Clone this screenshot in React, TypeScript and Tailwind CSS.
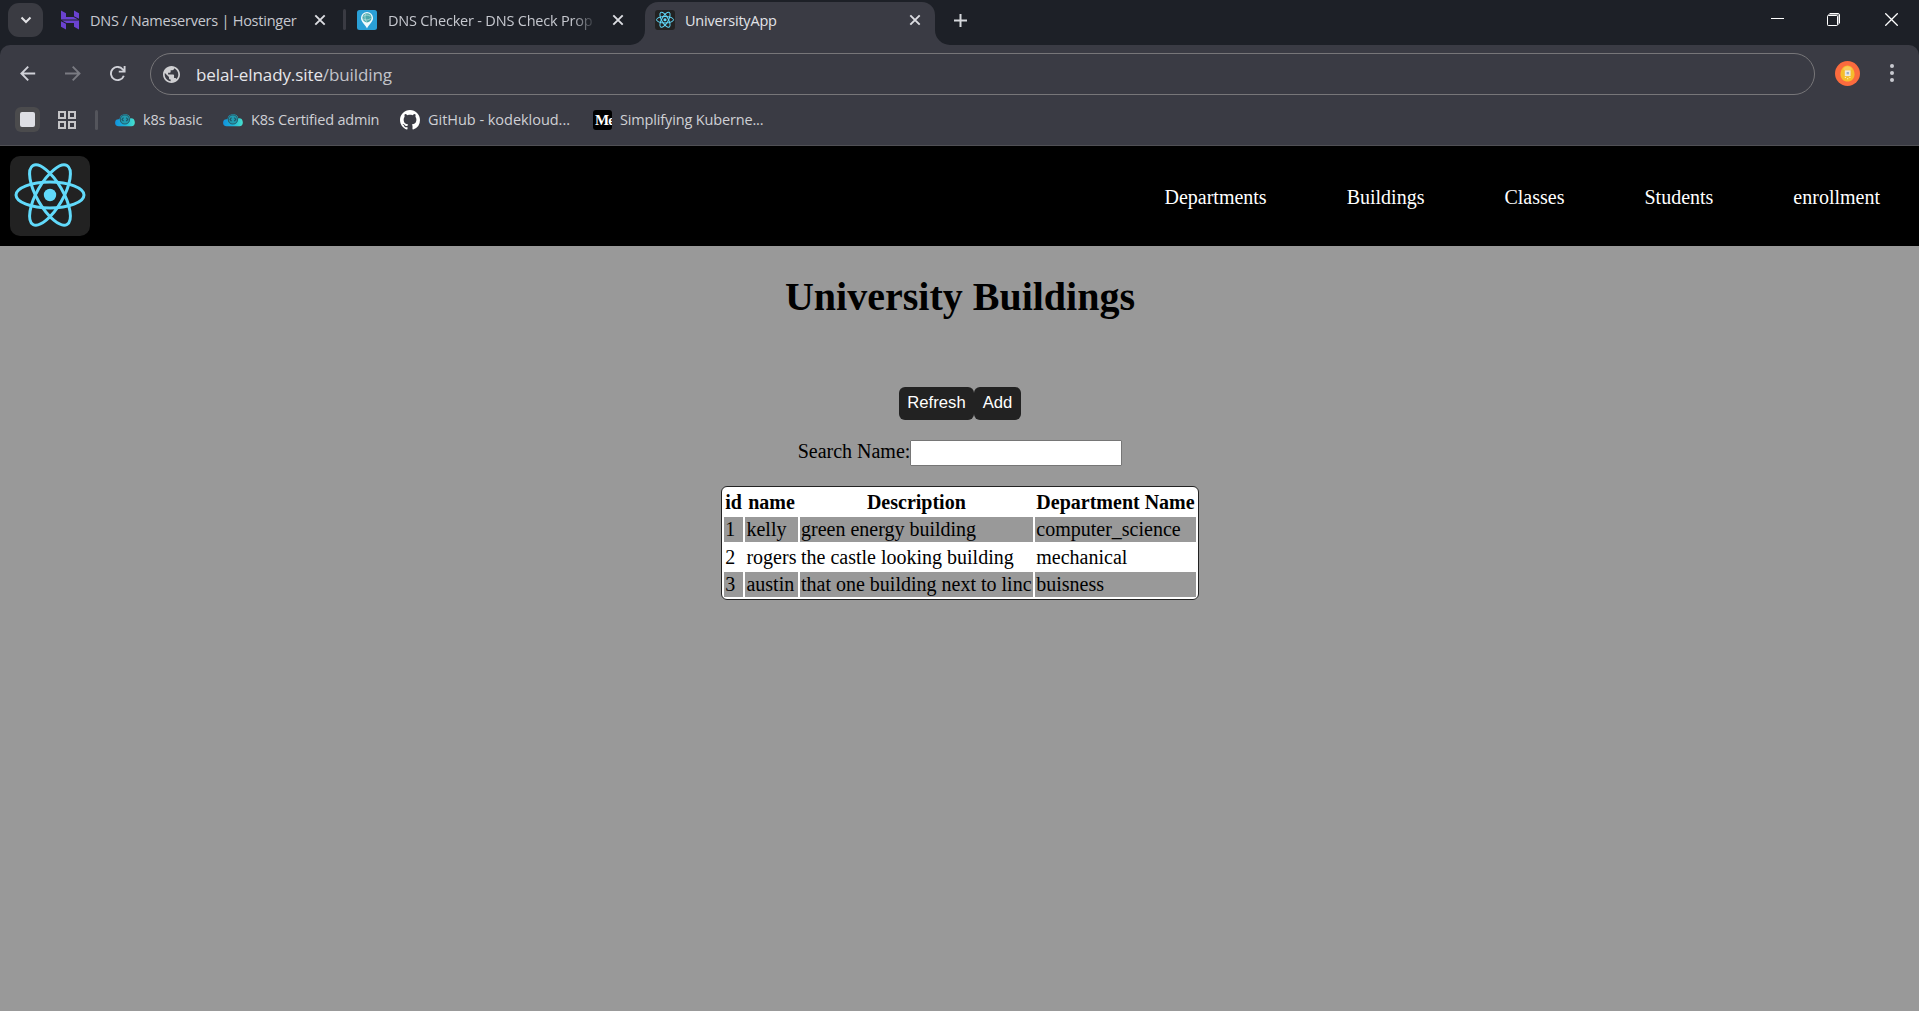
import React from "react";

const UI = "font-['Open_Sans','Noto_Sans',sans-serif]";

function ReactLogo({ className, stroke }: { className: string; stroke: number }) {
  return (
    <svg viewBox="-40 -40 80 80" className={className} fill="none" stroke="#61dafb" strokeWidth={stroke}>
      <circle r="6.2" cy="-1" fill="#61dafb" stroke="none" />
      <g transform="translate(0 -1)">
        <ellipse rx="34" ry="13" />
        <ellipse rx="34" ry="13" transform="rotate(60)" />
        <ellipse rx="34" ry="13" transform="rotate(120)" />
      </g>
    </svg>
  );
}

function Close({ className = "" }: { className?: string }) {
  return (
    <svg viewBox="0 0 12 12" className={`size-3 shrink-0 ${className}`} fill="none" stroke="#dcdde2" strokeWidth="1.9">
      <path d="M1.3 1.3 10.7 10.7M10.7 1.3 1.3 10.7" />
    </svg>
  );
}

function HostingerIcon() {
  return (
    <svg viewBox="0 0 18 20" className="h-5 w-[18px] shrink-0" fill="#6a42d0">
      <path d="M0 .5 5 3.200V7H12.500L17 9.400H0zM13 .5 18 3.200V8.800L13 6.200zM0 11.200 5 13.800V19.500L0 16.800zM1 10.600H18V19.500L13 16.800V13H5.500z" />
    </svg>
  );
}

function DnsIcon() {
  return (
    <svg viewBox="0 0 20 20" className="size-5 shrink-0">
      <rect width="20" height="20" rx="2.5" fill="#2a9fd6" />
      <path d="M10 18.5C8.2 14.6 4 12 4 8a6 6 0 0 1 12 0c0 4-4.200 6.600-6 10.500Z" fill="#f2fbfd" />
      <circle cx="10" cy="7.800" r="4.600" fill="#4ba9ab" />
      <path d="M6.500 6.300c2-1.800 5-1.600 6.800 0M6.200 9c2 1.600 5.600 1.300 7.400-.6M8.500 4c-1 2.500-.6 5.500 1 7.800" fill="none" stroke="#b3dedd" strokeWidth=".8" />
    </svg>
  );
}

function CloudIcon() {
  return (
    <svg viewBox="0 0 20 14" className="h-3.5 w-5 shrink-0">
      <defs>
        <linearGradient id="cloud" x1="0" x2="1">
          <stop offset="0" stopColor="#1292dd" />
          <stop offset="0.5" stopColor="#1db4d8" />
          <stop offset="1" stopColor="#48e0cd" />
        </linearGradient>
      </defs>
      <path d="M3.500 13.200A3.400 3.400 0 0 1 3.600 6.300L4.500 6a5.500 5.500 0 0 1 10.800-.6 3.900 3.900 0 0 1 1.100 7.800Z" fill="url(#cloud)" />
      <circle cx="9.900" cy="6.400" r="4.600" fill="#229bb0" stroke="#25606f" strokeWidth="1.200" />
      <path d="M8.500 4.600 7 6.400l1.500 1.800M11.300 4.600 12.800 6.400 11.300 8.200" fill="none" stroke="#1d5465" strokeWidth="1.100" />
    </svg>
  );
}

function GithubIcon() {
  return (
    <svg viewBox="0 0 16 16" className="size-5 shrink-0" fill="#fff">
      <path d="M8 0C3.580 0 0 3.580 0 8c0 3.540 2.290 6.530 5.470 7.590.4.070.55-.17.55-.38 0-.19-.010-.82-.010-1.490-2.010.37-2.530-.49-2.690-.94-.09-.23-.48-.94-.82-1.130-.28-.15-.68-.52-.010-.53.63-.010 1.080.58 1.230.82.72 1.210 1.870.87 2.330.66.070-.52.280-.87.510-1.070-1.780-.2-3.640-.89-3.640-3.950 0-.87.310-1.590.820-2.150-.080-.2-.360-1.020.080-2.120 0 0 .670-.210 2.200.82.640-.18 1.320-.27 2-.27s1.360.09 2 .27c1.530-1.040 2.200-.82 2.200-.82.440 1.100.160 1.920.080 2.120.510.560.820 1.270.820 2.150 0 3.070-1.870 3.750-3.650 3.950.290.250.540.730.540 1.480 0 1.070-.010 1.930-.010 2.200 0 .210.150.460.550.380A8.010 8.010 0 0 0 16 8c0-4.420-3.580-8-8-8Z" />
    </svg>
  );
}

function TabStrip() {
  return (
    <div className="flex h-[45px] w-full bg-[#1d2027]">
      <div className="ml-2 mt-[3px] flex h-[34px] w-[35px] items-center justify-center rounded-[11px] bg-[#3a3b42]">
        <svg viewBox="0 0 12 8" className="h-2 w-3" fill="none" stroke="#e3e3e6" strokeWidth="2">
          <path d="M1.500 1.500 6 6l4.500-4.500" />
        </svg>
      </div>
      <div className="ml-[18px] flex h-10 w-[282px] items-center">
        <HostingerIcon />
        <span className="ml-[11px] w-[224px] whitespace-nowrap pt-px text-[14.500px] tracking-[-0.240px] text-[#c6c8cf]">DNS / Nameservers | Hostinger</span>
        <Close />
      </div>
      <div className="mt-[9px] h-[21px] w-[3px] rounded-full bg-[#3a3b43]" />
      <div className="ml-[11px] flex h-10 w-[273px] items-center">
        <DnsIcon />
        <span className="ml-[11px] mr-[15px] w-[209px] overflow-hidden whitespace-nowrap pt-px text-[14.500px] tracking-[-0.200px] text-[#c6c8cf] [mask-image:linear-gradient(to_right,black_88%,transparent)]">DNS Checker - DNS Check Prop</span>
        <Close />
      </div>
      <div className="flex w-[320px]">
        <div className="w-[15px] bg-[#3a3b44]">
          <div className="h-full rounded-br-[15px] bg-[#1d2027]" />
        </div>
        <div className="mt-0.5 flex w-[290px] rounded-t-[13px] bg-[#3a3b44] pl-[10px]">
          <div className="flex h-9 items-center">
            <div className="flex size-5 shrink-0 items-center justify-center rounded-[3px] bg-[#222]">
              <ReactLogo className="size-5" stroke={4} />
            </div>
            <span className="ml-[10px] w-[224px] whitespace-nowrap pt-px text-[14.500px] tracking-[-0.200px] text-[#e2e3e8]">UniversityApp</span>
            <Close />
          </div>
        </div>
        <div className="w-[15px] bg-[#3a3b44]">
          <div className="h-full rounded-bl-[15px] bg-[#1d2027]" />
        </div>
      </div>
      <svg viewBox="0 0 13 13" className="ml-[4px] mt-[14px] size-[13px]" stroke="#d6d7dc" strokeWidth="2">
        <path d="M6.500 0v13M0 6.500h13" />
      </svg>
      <div className="ml-auto mr-[21px] mt-[13px] flex">
        <svg viewBox="0 0 13 13" className="mr-[43px] size-[13px]" stroke="#fff">
          <path d="M0 5.500h13" />
        </svg>
        <svg viewBox="0 0 13 13" className="mr-[45px] size-[13px]" fill="none" stroke="#fff">
          <path d="M2.500.5H11A1.500 1.500 0 0 1 12.500 2v8.500" />
          <path d="M1 1.500H11.500V12" stroke="#8b8c91" />
          <rect x=".5" y="2.500" width="10" height="10" rx=".7" />
        </svg>
        <svg viewBox="0 0 13 13" className="size-[13px]" stroke="#fff" strokeWidth="1.300">
          <path d="m.3.3 12.400 12.400M12.700.3.3 12.700" />
        </svg>
      </div>
    </div>
  );
}

function AddressBar() {
  return (
    <div className="flex h-[58px] items-center pl-5">
      <svg viewBox="0 0 16 16" className="size-4" fill="none" stroke="#d0d1d8" strokeWidth="1.900">
        <path d="M15.200 7.500H1.500M8.200.7 1.400 7.500l6.800 6.800" />
      </svg>
      <svg viewBox="0 0 16 16" className="ml-[29px] size-4" fill="none" stroke="#7a7b82" strokeWidth="1.900">
        <path d="M0 7.500h14.300M7.700.7 14.500 7.500l-6.800 6.800" />
      </svg>
      <svg viewBox="0 0 16 16" className="ml-[29px] size-4" fill="none" stroke="#d0d1d8" strokeWidth="1.900">
        <path d="M13.800 9.700A6.600 6.600 0 1 1 12.800 3.500L14.600 5.400M14.600 0v5.600H8.800" />
      </svg>
      <div className="ml-6 flex h-[42px] w-[1665px] items-center rounded-full border border-[#777679] pl-3">
        <svg viewBox="2 2 20 20" className="size-[17px]" fill="#cfcfd2">
          <path d="M12 2C6.480 2 2 6.480 2 12s4.480 10 10 10 10-4.480 10-10S17.520 2 12 2zm-1 17.930c-3.950-.49-7-3.850-7-7.930 0-.62.080-1.210.210-1.790L9 15v1c0 1.100.9 2 2 2v1.930zm6.900-2.540c-.26-.81-1-1.390-1.900-1.390h-1v-3c0-.55-.45-1-1-1H8v-2h2c.55 0 1-.45 1-1V7h2c1.100 0 2-.9 2-2v-.41c2.930 1.190 5 4.060 5 7.410 0 2.080-.8 3.970-2.100 5.390z" />
        </svg>
        <span className="ml-4 whitespace-nowrap pt-px text-[17px] tracking-[-0.100px] text-[#e6e6ea]">
          belal-elnady.site<span className="text-[#c2c3c9]">/building</span>
        </span>
      </div>
      <svg viewBox="0 0 25 25" className="ml-5 size-[25px] -translate-y-px">
        <circle cx="12.500" cy="12.500" r="12.500" fill="#fb6b3e" />
        <path d="M12.500 4.500c4.200 0 7 4.300 7 8.700 0 4.600-3 7.300-7 7.300s-7-2.700-7-7.300c0-4.400 2.800-8.700 7-8.700Z" fill="#f5bd2c" />
        <path d="M8.500 7.500c2-3 6-3 8 0v1.500h-8z" fill="#f8c95a" />
        <rect x="9.800" y="9.300" width="5.800" height="5.800" fill="#ece8e0" />
        <rect x="11.600" y="11" width="2.300" height="2.300" fill="#9aaec4" />
        <path d="M9.800 16.500h1.200M14.300 16.500h1.200M12 17.800h1.300" stroke="#fff0b0" strokeWidth="1.100" />
      </svg>
      <svg viewBox="0 0 4 18" className="ml-[30px] h-[18px] w-1 -translate-y-px" fill="#c8c9d0">
        <circle cx="2" cy="2" r="2" />
        <circle cx="2" cy="9" r="2" />
        <circle cx="2" cy="16" r="2" />
      </svg>
    </div>
  );
}

function Bookmark({ icon, label, className }: { icon: React.ReactNode; label: string; className: string }) {
  return (
    <div className={`flex items-center gap-2 whitespace-nowrap text-[14.500px] text-[#cfd0d5] ${className}`}>
      {icon}
      <span>{label}</span>
    </div>
  );
}

function BookmarksBar() {
  return (
    <div className="flex h-[43px] items-center border-b border-[#505055] pb-[9px] pl-[15px]">
      <div className="flex size-[25px] items-center justify-center rounded-md bg-[#4b4b4d]">
        <div className="size-[15px] rounded-[2px] bg-[#dedfe4]" />
      </div>
      <svg viewBox="0 0 18 18" className="ml-[18px] size-[18px]" fill="none" stroke="#c5c5c8" strokeWidth="2">
        <path d="M1 1h6v6H1zM11 1h6v6h-6zM1 11h6v6H1zM11 11h6v6h-6z" />
      </svg>
      <div className="ml-[19px] h-5 w-[3px] rounded-full bg-[#54555c]" />
      <Bookmark className="ml-[17px] w-[108px] tracking-[-0.200px]" icon={<CloudIcon />} label="k8s basic" />
      <Bookmark className="w-[177px] tracking-[-0.200px]" icon={<CloudIcon />} label="K8s Certified admin" />
      <Bookmark className="w-[193px] tracking-[-0.030px]" icon={<GithubIcon />} label="GitHub - kodekloud..." />
      <Bookmark
        className="tracking-[-0.150px]"
        icon={
          <svg viewBox="0 0 19 20" className="h-5 w-[19px] overflow-hidden rounded-[3px] bg-black">
            <text x="2" y="15" fill="#fff" className="font-['Liberation_Serif',serif] text-[15px] font-bold" letterSpacing="-1">Me</text>
          </svg>
        }
        label="Simplifying Kuberne..."
      />
    </div>
  );
}

const links = ["Departments", "Buildings", "Classes", "Students", "enrollment"];

const rows = [
  ["1", "kelly", "green energy building", "computer_science"],
  ["2", "rogers", "the castle looking building", "mechanical"],
  ["3", "austin", "that one building next to linc", "buisness"],
];

export default function App() {
  return (
    <div className="flex h-[1011px] w-full flex-col overflow-hidden bg-[#999]">
      <div className={`shrink-0 bg-[#1d2027] ${UI}`}>
        <TabStrip />
        <div className="rounded-t-[10px] bg-[#3a3b44]">
          <AddressBar />
          <BookmarksBar />
        </div>
      </div>
      <div className="flex flex-1 flex-col font-['Liberation_Serif',serif] text-[20px] leading-[23px] text-black">
        <header className="flex h-[100px] items-center justify-between bg-black pl-[10px] pr-[39px] text-white">
          <div className="flex size-20 items-center justify-center rounded-[10px] bg-[#222]">
            <ReactLogo className="size-20" stroke={3} />
          </div>
          <nav className="flex gap-20 pt-[3px]">
            {links.map((l) => (
              <a key={l}>{l}</a>
            ))}
          </nav>
        </header>
        <main className="flex flex-col items-center pl-px">
          <h1 className="mt-7 text-[40px] font-bold leading-[46px]">University Buildings</h1>
          <div className="mt-[67px] flex font-['Liberation_Sans',sans-serif] text-[16.667px] leading-[19px] text-white">
            <button className="h-[33px] w-[75px] rounded-[6px] bg-[#222] pb-[3px]">Refresh</button>
            <button className="h-[33px] w-[47px] rounded-[6px] bg-[#222] pb-[3px]">Add</button>
          </div>
          <label className="mt-5 flex h-[26px] items-start">
            <span>Search Name:</span>
            <input className="h-[26px] w-[212px] rounded-[1px] border border-[#767676] bg-white" />
          </label>
          <table className="mt-5 w-[478px] border-separate border-spacing-[2px] rounded-[6px] border border-[#222] bg-white">
            <thead>
              <tr>
                {["id", "name", "Description", "Department Name"].map((h) => (
                  <th key={h} className="px-[1.250px] pb-[0.500px] pt-[2px] text-center">{h}</th>
                ))}
              </tr>
            </thead>
            <tbody>
              {rows.map((r) => (
                <tr key={r[0]} className="group">
                  {r.map((c) => (
                    <td key={c} className="px-[1.250px] pb-[0.750px] pt-[1.750px] group-odd:bg-[#999]">{c}</td>
                  ))}
                </tr>
              ))}
            </tbody>
          </table>
        </main>
      </div>
    </div>
  );
}
